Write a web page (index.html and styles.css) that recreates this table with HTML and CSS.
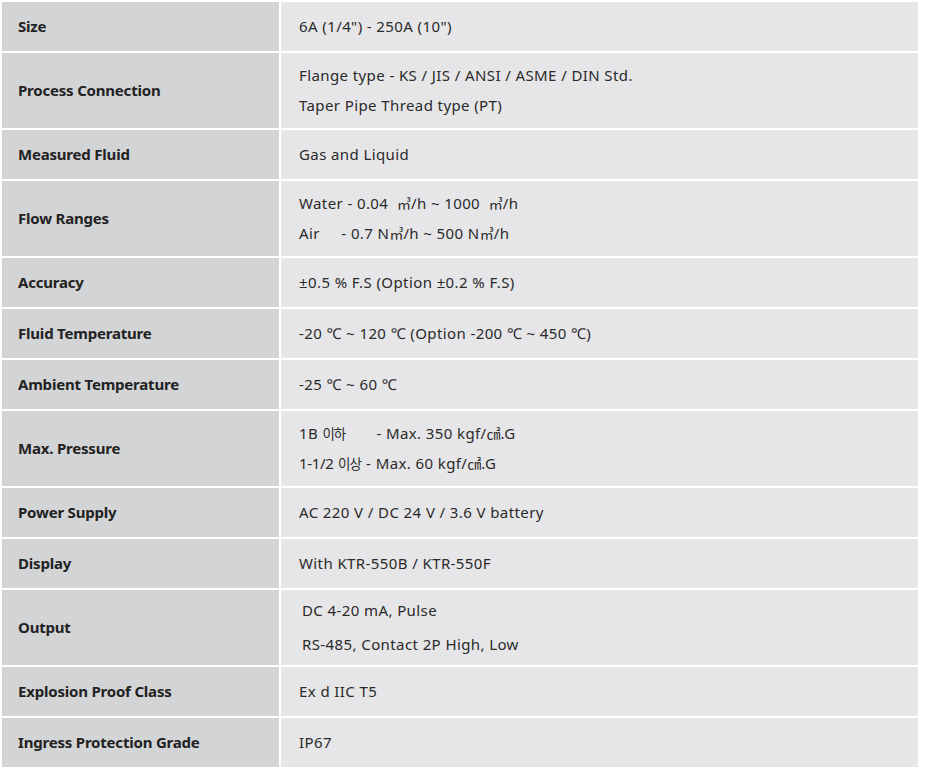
FILE: index.html
```html
<!DOCTYPE html>
<html lang="ko">
<head>
<meta charset="utf-8">
<title>Specification</title>
<link rel="stylesheet" href="styles.css">
</head>
<body>
<table class="spec">
  <tbody>
    <tr class="one"><th>Size</th><td>6A (1/4") - 250A (10")</td></tr>
    <tr class="two"><th>Process Connection</th><td><div class="ln">Flange type - KS / JIS / ANSI / ASME / DIN Std.</div><div class="ln">Taper Pipe Thread type (PT)</div></td></tr>
    <tr class="one"><th>Measured Fluid</th><td>Gas and Liquid</td></tr>
    <tr class="two"><th>Flow Ranges</th><td><div class="ln">Water - 0.04 &nbsp;<span class="unit">㎥</span>/h ~ 1000 &nbsp;<span class="unit">㎥</span>/h</div><div class="ln">Air &nbsp;&nbsp;&nbsp;&nbsp;- 0.7 N<span class="unit">㎥</span>/h ~ 500 N<span class="unit">㎥</span>/h</div></td></tr>
    <tr class="one"><th>Accuracy</th><td>±0.5 % F.S (Option ±0.2 % F.S)</td></tr>
    <tr class="one"><th>Fluid Temperature</th><td>-20 ℃ ~ 120 ℃ (Option -200 ℃ ~ 450 ℃)</td></tr>
    <tr class="one"><th>Ambient Temperature</th><td>-25 ℃ ~ 60 ℃</td></tr>
    <tr class="two"><th>Max. Pressure</th><td><div class="ln">1B <span class="ko">이하</span> &nbsp;&nbsp;&nbsp;&nbsp;&nbsp;&nbsp;- Max. 350 kgf/<span class="unit">㎠</span>.G</div><div class="ln"><span class="tight">1-1/2</span> <span class="ko">이상</span> - Max. 60 kgf/<span class="unit">㎠</span>.G</div></td></tr>
    <tr class="one"><th>Power Supply</th><td>AC 220 V / DC 24 V / 3.6 V battery</td></tr>
    <tr class="one"><th>Display</th><td>With KTR-550B / KTR-550F</td></tr>
    <tr class="two"><th>Output</th><td class="out"><p class="par">DC 4-20 mA, Pulse</p><p class="par">RS-485, Contact 2P High, Low</p></td></tr>
    <tr class="one"><th>Explosion Proof Class</th><td>Ex d IIC T5</td></tr>
    <tr class="one"><th>Ingress Protection Grade</th><td>IP67</td></tr>
  </tbody>
</table>
</body>
</html>
```

FILE: styles.css
```css
html, body {
  margin: 0;
  padding: 0;
  background: #ffffff;
}

body {
  font-family: "Noto Sans", "Noto Sans CJK KR", sans-serif;
  font-size: 15px;
  color: #2a2a2a;
}

.spec {
  border-collapse: separate;
  border-spacing: 2px;
  width: 920px;
}

.spec th,
.spec td {
  padding: 0 0 2px 0;
  vertical-align: middle;
  text-align: left;
}

.spec th {
  width: 261px;
  padding-left: 16px;
  background: #d3d4d6;
  font-weight: 700;
  letter-spacing: -0.2px;
  color: #222222;
}

.spec td {
  padding-left: 18px;
  background: #e6e6e8;
  font-weight: 400;
  letter-spacing: 0.4px;
}

.one th, .one td { height: 47px; }
.two th, .two td { height: 73px; }

.ln {
  line-height: 30px;
}

.ko {
  font-family: "Noto Sans CJK KR", sans-serif;
  font-size: 13.5px;
  letter-spacing: -1px;
  margin-right: 1px;
}

.tight {
  letter-spacing: -0.3px;
}

.unit {
  font-family: "Noto Sans CJK KR", sans-serif;
  font-size: 14px;
  letter-spacing: 0;
}

.spec td.out {
  padding-left: 21px;
}

.par {
  margin: 0;
  line-height: 34px;
}
```
